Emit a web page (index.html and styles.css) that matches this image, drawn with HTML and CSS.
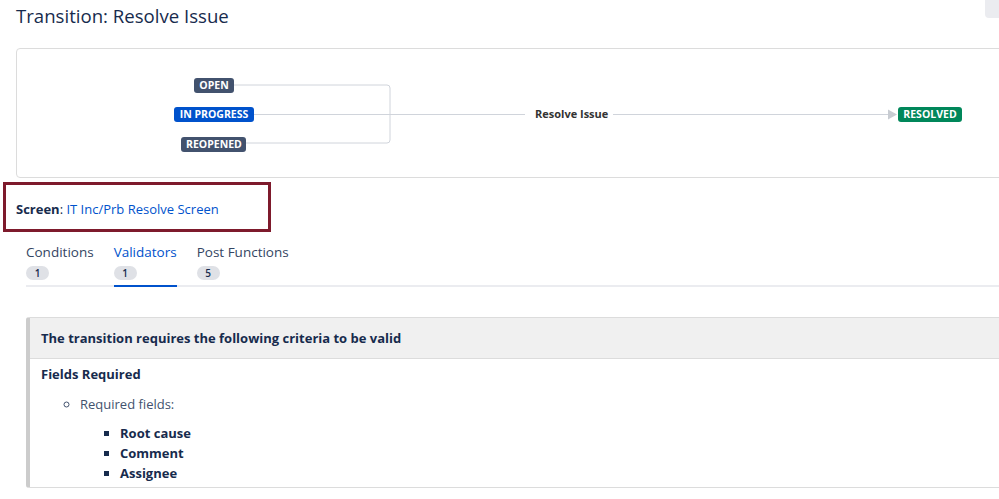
FILE: index.html
```html
<!DOCTYPE html>
<html lang="en">
<head>
  <meta charset="UTF-8">
  <meta name="viewport" content="width=device-width, initial-scale=1.0">
  <title>Transition: Resolve Issue</title>
  <link rel="stylesheet" href="styles.css">
</head>
<body>
  <div class="corner-button"></div>
  <h1 class="page-title">Transition: Resolve Issue</h1>

  <!-- Workflow diagram -->
  <div class="diagram">
    <svg class="diagram-lines" width="1000" height="130" viewBox="0 0 1000 130">
      <path d="M217 37 H371 Q374 37 374 40 V92 Q374 95 371 95 H229" fill="none" stroke="#d0d4db" stroke-width="1"/>
      <path d="M237 66.5 H509" fill="none" stroke="#d0d4db" stroke-width="1"/>
      <path d="M597 66.5 H872" fill="none" stroke="#d0d4db" stroke-width="1"/>
      <polygon points="872,61.5 881,66.5 872,71.5" fill="#c8ccd2"/>
    </svg>
    <span class="status status-grey node-open">OPEN</span>
    <span class="status status-blue node-progress">IN PROGRESS</span>
    <span class="status status-grey node-reopened">REOPENED</span>
    <span class="transition-label">Resolve Issue</span>
    <span class="status status-green node-resolved">RESOLVED</span>
  </div>

  <div class="screen-box">
    <strong>Screen</strong>: <a class="screen-link" href="#">IT Inc/Prb Resolve Screen</a>
  </div>

  <div class="tabs">
    <div class="tab">
      <span class="tab-name">Conditions</span>
      <span class="tab-count">1</span>
    </div>
    <div class="tab active">
      <span class="tab-name">Validators</span>
      <span class="tab-count">1</span>
    </div>
    <div class="tab">
      <span class="tab-name">Post Functions</span>
      <span class="tab-count">5</span>
    </div>
  </div>

  <div class="panel">
    <div class="panel-header">The transition requires the following criteria to be valid</div>
    <div class="panel-body">
      <div class="panel-title">Fields Required</div>
      <ul class="circle-list">
        <li>Required fields:
          <ul class="square-list">
            <li>Root cause</li>
            <li>Comment</li>
            <li>Assignee</li>
          </ul>
        </li>
      </ul>
    </div>
  </div>
</body>
</html>
```

FILE: styles.css
```css
html {
  overflow: hidden;
}
body {
  margin: 0;
  width: 999px;
  font-family: "Open Sans", "Noto Sans", "Liberation Sans", sans-serif;
  font-size: 13px;
  color: #172b4d;
  background: #fff;
  position: relative;
}
.page-title {
  margin: 0;
  padding: 3px 0 0 16px;
  height: 45px;
  box-sizing: border-box;
  font-size: 18.6px;
  font-weight: 400;
  line-height: 26px;
  color: #172b4d;
}
.corner-button {
  position: absolute;
  top: -6px;
  left: 985px;
  width: 30px;
  height: 24px;
  border-radius: 4px;
  background: #ebecf0;
}
/* Diagram */
.diagram {
  position: relative;
  margin-left: 16px;
  margin-top: 3px;
  width: 1000px;
  height: 130px;
  box-sizing: border-box;
  border: 1px solid #dcdcdc;
  border-radius: 4px;
}
.diagram-lines {
  position: absolute;
  top: -1px;
  left: -1px;
}
.status {
  position: absolute;
  height: 15px;
  padding: 0 5px;
  border-radius: 3px;
  color: #fff;
  font-size: 10.5px;
  font-weight: 700;
  line-height: 15px;
  white-space: nowrap;
  box-sizing: border-box;
}
.status-grey { background: #42526e; }
.status-blue { background: #0052cc; }
.status-green { background: #00875a; }
.node-open { left: 177px; top: 29px; width: 40px; text-align: center; }
.node-progress { left: 157px; top: 58px; width: 80px; text-align: center; }
.node-reopened { left: 164px; top: 88px; width: 65px; text-align: center; }
.node-resolved { left: 881px; top: 58px; width: 64px; text-align: center; }
.transition-label {
  position: absolute;
  left: 518px;
  top: 57px;
  font-size: 11px;
  font-weight: 700;
  line-height: 16px;
  color: #333;
}
/* Screen */
.screen-box {
  margin: 4px 0 0 3px;
  width: 268px;
  height: 50px;
  box-sizing: border-box;
  border: 3px solid #7e1a2c;
  padding: 15px 0 0 10px;
  font-size: 13px;
  line-height: 18px;
}
.screen-link {
  color: #0052cc;
  text-decoration: none;
}
/* Tabs */
.tabs {
  display: flex;
  gap: 20px;
  margin: 11px 0 0 26px;
  border-bottom: 2px solid #ebecf0;
}
.tab {
  display: flex;
  flex-direction: column;
  align-items: flex-start;
  padding-bottom: 5px;
  margin-bottom: -2px;
  border-bottom: 2px solid transparent;
}
.tab.active {
  border-bottom-color: #0052cc;
}
.tab-name {
  font-size: 13.5px;
  line-height: 19px;
  color: #344563;
}
.tab.active .tab-name {
  color: #0052cc;
}
.tab-count {
  margin-top: 4px;
  min-width: 23px;
  height: 14px;
  border-radius: 7px;
  background: #dfe1e6;
  font-size: 10px;
  font-weight: 600;
  line-height: 14px;
  text-align: center;
  color: #172b4d;
}
/* Panel */
.panel {
  margin: 30px 0 0 26px;
  border: 1px solid #dcdcdc;
  border-left: 4px solid #cccccc;
  border-right: none;
  border-radius: 3px 0 0 3px;
}
.panel-header {
  height: 40px;
  padding-left: 11px;
  background: #f0f0f0;
  border-bottom: 1px solid #dcdcdc;
  font-size: 13px;
  font-weight: 700;
  line-height: 40px;
}
.panel-body {
  padding: 5px 0 4px 11px;
  font-size: 13px;
}
.panel-title {
  font-weight: 700;
  line-height: 20px;
}
.circle-list {
  margin: 10px 0 0;
  padding-left: 39px;
  list-style: circle;
  line-height: 20px;
  color: #42526e;
}
.square-list {
  margin: 9px 0 0;
  padding-left: 40px;
  list-style: square;
  font-weight: 700;
  color: #172b4d;
}
```
